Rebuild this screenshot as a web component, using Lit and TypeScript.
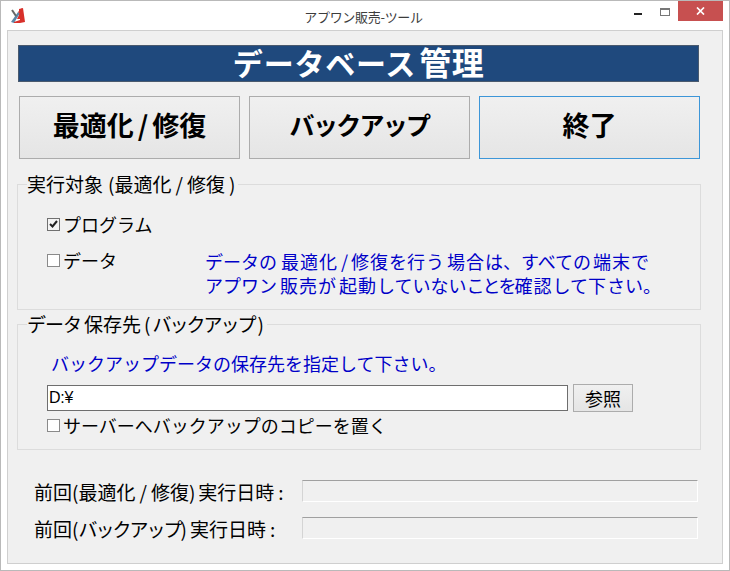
import { LitElement, html, css } from "lit";
import { customElement } from "lit/decorators.js";

@customElement("app-root")
class AppRoot extends LitElement {
  static styles = css`
    :host { display: block; width: 730px; height: 571px; overflow: hidden;
      font-family: "MS Gothic", "Noto Sans CJK JP", sans-serif; color: #000; }
    * { box-sizing: border-box; }
    .win { width: 730px; height: 571px; background: #fff; border: 1px solid #b9b9b9; display: flex; flex-direction: column; }
    .title { height: 29px; flex: none; display: flex; align-items: flex-start; position: relative; }
    .appicon { margin: 6px 0 0 9px; width: 16px; height: 17px; flex: none; }
    .ttext { position: absolute; left: 0; right: 0; top: 7px; padding-right: 3px; text-align: center; font-size: 13px; line-height: 18px; color: #3c3c3c; letter-spacing: -.3px; }
    .ctl { margin-left: auto; margin-right: 6px; display: flex; align-items: flex-start; height: 20px; }
    .ctlb { height: 20px; display: flex; }
    .min { width: 26px; padding: 12px 0 0 0; }
    .max { width: 18px; padding: 7px 0 0 0; }
    .close { width: 45px; background: #c75050; margin-left: 0; align-items: center; justify-content: center; }
    .client { margin: 0 6px 6px 6px; flex: 1; background: #f0f0f0; border: 1px solid #cfcfcf; padding: 14px 0 0 10px; display: flex; flex-direction: column; }
    .head { width: 681px; height: 37px; background: #1f497d; border: 1px solid #4a5a6e; color: #fff; font-weight: 700; font-size: 30px; line-height: 31px; text-align: center; white-space: nowrap; }
    .head .hn { letter-spacing: .8px; }
    .head .hk { font-size: 32px; margin-left: 3px; letter-spacing: .5px; }
    .btns { display: flex; gap: 9px; margin: 14px 0 0 1px; }
    .btn { width: 221px; height: 63px; border: 1px solid #acacac; background: linear-gradient(#f0f0f0, #e5e5e5); font-weight: 700; font-size: 27px; display: flex; align-items: center; justify-content: center; padding-bottom: 7px; white-space: nowrap; }
    .btn.focus { border-color: #3d96d8; }
    .btn .kana { font-size: 25px; letter-spacing: -1.7px; }
    .btn .bsl { padding: 0 4px; }
    .fs { width: 684px; margin-left: -1px; border: 1px solid #dcdcdc; position: relative; height: 126px; }
    .fs1 { margin-top: 25px; }
    .fs2 { margin-top: 14px; }
    .legend { position: absolute; left: 9px; top: -12px; background: #f0f0f0; font-size: 19px; line-height: 22px; height: 22px; padding: 0 3px 0 0; white-space: nowrap; }
    .body1 { display: grid; grid-template-columns: 158px auto; padding: 27px 0 0 29px; }
    .chk { display: flex; align-items: center; font-size: 18px; line-height: 24px; white-space: nowrap; }
    .box { width: 13px; height: 13px; border: 1px solid #8a8a8a; background: #fff; margin-right: 3px; flex: none; display: flex; align-items: center; justify-content: center; }
    .on { background: #f4f4f4; border-color: #707070; }
    .p2 { margin-top: 12px; }
    .note { color: #0000c8; font-size: 18px; line-height: 24px; white-space: nowrap; }
    .checkcol { grid-column: 1; grid-row: 1; }
    .notewrap { grid-column: 2; grid-row: 1; padding-top: 37px; }
    .body2 { padding: 26px 0 0 29px; }
    .hint { color: #0000c8; font-size: 18px; line-height: 24px; padding-left: 4px; white-space: nowrap; }
    .row { display: flex; margin-top: 9px; align-items: center; gap: 5px; }
    .input { width: 521px; height: 26px; border: 1px solid #6e6e6e; background: #fff; font-size: 16px; line-height: 23px; padding-left: 1px; font-family: "Liberation Sans", sans-serif; letter-spacing: -.3px; }
    .ref { width: 60px; height: 28px; border: 1px solid #acacac; background: linear-gradient(#f0f0f0, #e5e5e5); font-size: 18px; display: flex; align-items: center; justify-content: center; }
    .sv { margin-top: 1px; }
    .dates { margin: 30px 0 0 0; display: flex; flex-direction: column; }
    .drow { display: flex; align-items: center; justify-content: space-between; padding-left: 16px; width: 680px; height: 22px; }
    .drow2 { margin-top: 15px; }
    .dlabel { font-size: 19px; line-height: 24px; white-space: nowrap; margin-top: 2px; }
    .dbox { width: 396px; height: 22px; border: 1px solid; border-color: #a0a0a0 #fff #fff #d4d4d4; flex: none; }
    .k { letter-spacing: 1px; }
    .g2 { margin-left: 2px; }
    .g3 { margin-left: 3px; }
    .g4 { margin-left: 4px; }
    .sl { padding: 0 3px; }
    .lsl { padding: 0 4px; }
    .pl { padding-left: 5px; }
    .tight { letter-spacing: -2px; }
    .t1 { letter-spacing: -1px; }
    .pr { padding-right: 3px; }
    .colon { margin-left: 4px; }
  `;
  render() {
    return html`<div class="win">
      <div class="title">
        <svg class="appicon" viewBox="0 0 16 17">
          <path d="M9 2 L13 1 L15 15 L10 16 L10 12 L7 12 L9 8Z" fill="#d8302a"/>
          <path d="M1 15 L8 5 L10 6 L4 16Z" fill="#5b86a8"/>
          <path d="M8 5 L12 1 L10 7Z" fill="#d8302a"/>
          <path d="M2 3 L6 9" stroke="#666" stroke-width="2"/>
          <path d="M4 15 L10 13 L10 16 L4 16Z" fill="#d8302a"/>
        </svg>
        <div class="ttext">アプワン販売-ツール</div>
        <div class="ctl">
          <div class="ctlb min"><svg width="8" height="2"><rect width="8" height="2" fill="#222"/></svg></div>
          <div class="ctlb max"><svg width="10" height="8"><rect x=".5" y=".5" width="9" height="7" fill="none" stroke="#777"/><rect width="10" height="2" fill="#777"/></svg></div>
          <div class="ctlb close"><svg width="9" height="8"><path d="M1 .5L8 7.5M8 .5L1 7.5" stroke="#fff" stroke-width="1.7"/></svg></div>
        </div>
      </div>
      <div class="client">
        <div class="head"><span class="hn">データベース</span><span class="hk">管理</span></div>
        <div class="btns">
          <div class="btn">最適化<span class="bsl">/</span>修復</div>
          <div class="btn"><span class="kana">バックアップ</span></div>
          <div class="btn focus">終了</div>
        </div>
        <div class="fs fs1">
          <div class="legend">実行対象<span class="pl">(</span>最適化<span class="lsl">/</span>修復<span class="g4">)</span></div>
          <div class="body1">
            <div class="checkcol">
              <div class="chk"><span class="box on"><svg width="9" height="8"><path d="M1 4L3.5 6.5L8 1" fill="none" stroke="#222" stroke-width="2"/></svg></span>プログラム</div>
              <div class="chk p2"><span class="box"></span>データ</div>
            </div>
            <div class="notewrap"><div class="note">データの<span class="k g4">最適化</span><span class="sl">/</span><span class="k">修復</span>を<span class="k">行</span>う<span class="k g3">場合</span>は、すべての<span class="k g2">端末</span>で<br>アプワン<span class="k g3">販売</span>が<span class="k g3">起動</span>していない<span class="tight">ことを</span><span class="k">確認</span>して<span class="k">下</span>さい。</div></div>
          </div>
        </div>
        <div class="fs fs2">
          <div class="legend"><span class="t1">データ</span><span class="g3">保存先</span><span class="g3">(</span><span class="tight g2">バックアップ</span><span class="g3">)</span></div>
          <div class="body2">
            <div class="hint">バックアップデータの保存先を指定して下さい。</div>
            <div class="row"><div class="input">D:¥</div><div class="ref">参照</div></div>
            <div class="chk sv"><span class="box"></span>サーバーへバックアップのコピーを置く</div>
          </div>
        </div>
        <div class="dates">
          <div class="drow"><div class="dlabel">前回(最適化<span class="lsl">/</span>修復<span class="pr">)</span>実行日時<span class="colon">:</span></div><div class="dbox"></div></div>
          <div class="drow drow2"><div class="dlabel">前回(<span class="tight">バックアップ</span><span class="pr">)</span>実行日時<span class="colon">:</span></div><div class="dbox"></div></div>
        </div>
      </div>
    </div>`;
  }
}
